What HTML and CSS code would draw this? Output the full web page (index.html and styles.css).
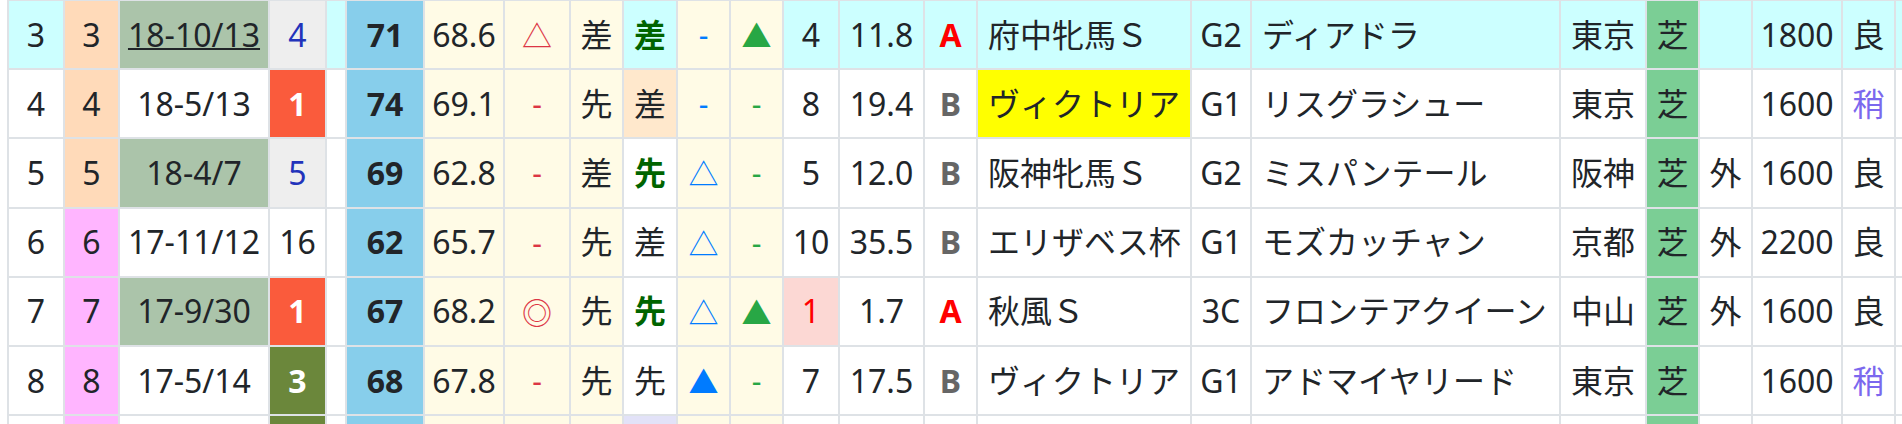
FILE: index.html
```html
<!DOCTYPE html>
<html lang="ja">
<head>
<meta charset="utf-8">
<title>戦績</title>
<link rel="stylesheet" href="styles.css">
</head>
<body>
<div class="table">
  <div class="row cur">
    <div>3</div><div class="waku peach">3</div><div class="date sage"><a href="#">18-10/13</a></div><div class="rank rg">4</div><div></div><div class="idx">71</div><div class="cream">68.6</div><div class="cream mk red">△</div><div class="cream">差</div><div class="strong">差</div><div class="cream dash blue">-</div><div class="cream mk green">▲</div><div>4</div><div>11.8</div><div class="grade a">A</div><div class="left">府中牝馬Ｓ</div><div>G2</div><div class="left">ディアドラ</div><div>東京</div><div class="turf">芝</div><div></div><div>1800</div><div>良</div><div></div>
  </div>
  <div class="row">
    <div>4</div><div class="waku peach">4</div><div class="date">18-5/13</div><div class="rank r1">1</div><div></div><div class="idx">74</div><div class="cream">69.1</div><div class="cream dash red">-</div><div class="cream">先</div><div class="orange">差</div><div class="cream dash blue">-</div><div class="cream dash green">-</div><div>8</div><div>19.4</div><div class="grade b">B</div><div class="left yellow">ヴィクトリア</div><div>G1</div><div class="left">リスグラシュー</div><div>東京</div><div class="turf">芝</div><div></div><div>1600</div><div class="yaya">稍</div><div></div>
  </div>
  <div class="row">
    <div>5</div><div class="waku peach">5</div><div class="date sage">18-4/7</div><div class="rank rg">5</div><div></div><div class="idx">69</div><div class="cream">62.8</div><div class="cream dash red">-</div><div class="cream">差</div><div class="strong">先</div><div class="cream mk blue">△</div><div class="cream dash green">-</div><div>5</div><div>12.0</div><div class="grade b">B</div><div class="left">阪神牝馬Ｓ</div><div>G2</div><div class="left">ミスパンテール</div><div>阪神</div><div class="turf">芝</div><div>外</div><div>1600</div><div>良</div><div></div>
  </div>
  <div class="row">
    <div>6</div><div class="waku pink">6</div><div class="date">17-11/12</div><div class="rank">16</div><div></div><div class="idx">62</div><div class="cream">65.7</div><div class="cream dash red">-</div><div class="cream">先</div><div>差</div><div class="cream mk blue">△</div><div class="cream dash green">-</div><div>10</div><div>35.5</div><div class="grade b">B</div><div class="left">エリザベス杯</div><div>G1</div><div class="left">モズカッチャン</div><div>京都</div><div class="turf">芝</div><div>外</div><div>2200</div><div>良</div><div></div>
  </div>
  <div class="row">
    <div>7</div><div class="waku pink">7</div><div class="date sage">17-9/30</div><div class="rank r1">1</div><div></div><div class="idx">67</div><div class="cream">68.2</div><div class="cream mk red">◎</div><div class="cream">先</div><div class="strong">先</div><div class="cream mk blue">△</div><div class="cream mk green">▲</div><div class="pop1">1</div><div>1.7</div><div class="grade a">A</div><div class="left">秋風Ｓ</div><div class="cls">3C</div><div class="left">フロンテアクイーン</div><div>中山</div><div class="turf">芝</div><div>外</div><div>1600</div><div>良</div><div></div>
  </div>
  <div class="row">
    <div>8</div><div class="waku pink">8</div><div class="date">17-5/14</div><div class="rank r3">3</div><div></div><div class="idx">68</div><div class="cream">67.8</div><div class="cream dash red">-</div><div class="cream">先</div><div>先</div><div class="cream mk blue">▲</div><div class="cream dash green">-</div><div>7</div><div>17.5</div><div class="grade b">B</div><div class="left">ヴィクトリア</div><div>G1</div><div class="left">アドマイヤリード</div><div>東京</div><div class="turf">芝</div><div></div><div>1600</div><div class="yaya">稍</div><div></div>
  </div>
  <div class="row">
    <div></div><div class="waku pink"></div><div class="date"></div><div class="rank r3"></div><div></div><div class="idx"></div><div class="cream"></div><div class="cream"></div><div class="cream"></div><div class="lav"></div><div class="cream"></div><div class="cream"></div><div></div><div></div><div></div><div></div><div></div><div></div><div></div><div class="turf"></div><div></div><div></div><div></div><div></div>
  </div>
</div>
</body>
</html>
```

FILE: styles.css
```css
html, body {
  margin: 0;
  padding: 0;
  overflow: hidden;
  background: #fff;
}

body {
  font-family: "Noto Sans", "Noto Sans CJK JP", sans-serif;
  font-size: 32px;
  color: #212529;
}

.table {
  margin-left: 7px;
  padding: 1px 0 0 2px;
  background: #dee2e6;
  display: flex;
  flex-direction: column;
  gap: 2px;
  width: max-content;
}

.row {
  --bg: #fff;
  display: grid;
  grid-template-columns: 54px 53px 148px 55px 18px 76px 78px 64px 51px 52px 51px 51px 54px 83px 51px 212px 58px 307px 84px 51px 51px 88px 51px 51px;
  column-gap: 2px;
  height: 67.2px;
}

.row.cur {
  --bg: #ccffff;
}

.row > * {
  background: var(--bg);
  display: flex;
  align-items: center;
  justify-content: center;
  white-space: nowrap;
  line-height: 1.5;
}

.left {
  justify-content: flex-start;
  padding: 0 10px;
}

.waku.peach { background: #ffdab9; }
.waku.pink { background: #ffb5ff; }

.date a {
  color: #212529;
  text-decoration: underline;
  text-decoration-thickness: 2px;
}
.sage { background: #abc4aa; }

.rank.rg { background: #eeeeee; color: #2233bb; }
.rank.r1 { background: #fa5b3c; color: #fff; font-weight: 700; }
.rank.r3 { background: #6b873b; color: #fff; font-weight: 700; }

.idx {
  background: #87ceeb;
  font-weight: 700;
}

.cream { background: #fffbe6; }

.red { color: #dc3545; }
.blue { color: #007bff; }
.green { color: #28a745; }

.mk { font-family: "Noto Sans CJK JP", sans-serif; font-size: 30px; }
.dash { font-size: 30px; }

.strong { color: #006400; font-weight: 700; }
.orange { background: #ffe8cc; }
.lav { background: #e2e2f8; }

.pop1 { background: #fcd8d4; color: #ff0000; }

.grade { font-weight: 700; }
.grade.a { color: #ff0000; }
.grade.b { color: #666666; }

.yellow { background: #ffff00; }

.turf { background: #7bce95; }

.yaya { color: #7b68ee; }
```
